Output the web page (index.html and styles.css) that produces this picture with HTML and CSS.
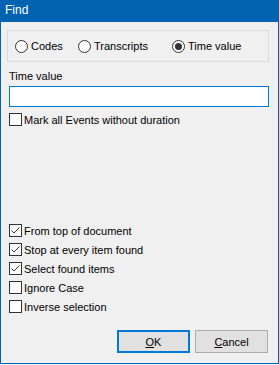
FILE: index.html
```html
<!DOCTYPE html>
<html lang="en">
  <head>
    <meta charset="UTF-8" />
    <title>Find</title>
    <link rel="stylesheet" href="styles.css">
  </head>
  <body>
    <div class="window">
      <div class="titlebar">Find</div>

      <div class="content">
        <!-- search kind -->
        <div class="group">
          <label class="radio codes"><span class="dot"></span>Codes</label>
          <label class="radio transcripts"><span class="dot"></span>Transcripts</label>
          <label class="radio"><span class="dot on"></span>Time value</label>
        </div>

        <div class="field-label">Time value</div>
        <div class="input"></div>

        <label class="check mark"><span class="box"></span>Mark all Events without duration</label>

        <!-- options -->
        <div class="options">
          <label class="check"><span class="box on"><svg viewBox="0 0 11 11"><path d="M1.5 5.5 L4 8 L9.5 2.5" /></svg></span>From top of document</label>
          <label class="check"><span class="box on"><svg viewBox="0 0 11 11"><path d="M1.5 5.5 L4 8 L9.5 2.5" /></svg></span>Stop at every item found</label>
          <label class="check"><span class="box on"><svg viewBox="0 0 11 11"><path d="M1.5 5.5 L4 8 L9.5 2.5" /></svg></span>Select found items</label>
          <label class="check"><span class="box"></span>Ignore Case</label>
          <label class="check"><span class="box"></span>Inverse selection</label>
        </div>

        <div class="buttons">
          <button class="btn default" type="button"><u>O</u>K</button>
          <button class="btn" type="button"><u>C</u>ancel</button>
        </div>
      </div>
    </div>
  </body>
</html>
```

FILE: styles.css
```css
:root {
  --blue: #0063b1;
  --focus: #0078d7;
  --ink: #000;
  --box: #333;
}
* {
  margin: 0;
  padding: 0;
  box-sizing: border-box;
}
body {
  background-color: #f0f0f0;
  font-family: "Liberation Sans", Arial, sans-serif;
  font-size: 11px;
  color: var(--ink);
}

/*
  Window frame
*/

.window {
  width: 279px;
  height: 364px;
  display: flex;
  flex-direction: column;
  border: 1px solid var(--blue);
  border-top: 0;
  background-color: #f0f0f0;
}
.titlebar {
  height: 22px;
  line-height: 21px;
  padding-left: 5px;
  margin: 0 -1px;
  font-size: 12px;
  color: white;
  background-color: var(--blue);
}
.content {
  flex: 1;
  display: flex;
  flex-direction: column;
  padding: 8px 9px 10px 8px;
}

/*
  Radio group
*/

.group {
  height: 32px;
  margin-left: -2px;
  padding-left: 7px;
  display: grid;
  grid-template-columns: 63px 94px auto;
  align-items: center;
  border: 1px solid #dcdcdc;
}
.radio {
  display: flex;
  align-items: center;
  gap: 3px;
}
.radio .dot {
  width: 13px;
  height: 13px;
  border-radius: 50%;
  border: 1px solid var(--box);
  background-color: white;
  display: flex;
  align-items: center;
  justify-content: center;
}
.radio .dot.on::after {
  content: "";
  width: 7px;
  height: 7px;
  border-radius: 50%;
  background-color: var(--box);
}

/*
  Time value field
*/

.field-label {
  margin-top: 6px;
  line-height: 16px;
}
.input {
  height: 21px;
  margin-top: 2px;
  border: 1px solid var(--focus);
  background-color: white;
}

/*
  Checkboxes
*/

.check {
  height: 19px;
  display: flex;
  align-items: center;
  gap: 2px;
}
.check.mark {
  margin-top: 3px;
}
.check .box {
  width: 13px;
  height: 13px;
  flex: none;
  border: 1px solid var(--box);
  background-color: white;
}
.check .box svg {
  display: block;
  width: 11px;
  height: 11px;
  fill: none;
  stroke: var(--box);
  stroke-width: 1;
}
.options {
  margin-top: auto;
}

/*
  Buttons
*/

.buttons {
  display: flex;
  justify-content: flex-end;
  gap: 5px;
  margin-top: 14px;
  padding-right: 1px;
}
.btn {
  width: 73px;
  height: 23px;
  font-family: inherit;
  font-size: 11px;
  color: var(--ink);
  background-color: #e1e1e1;
  border: 1px solid #adadad;
}
.btn.default {
  border: 2px solid var(--focus);
}
```
